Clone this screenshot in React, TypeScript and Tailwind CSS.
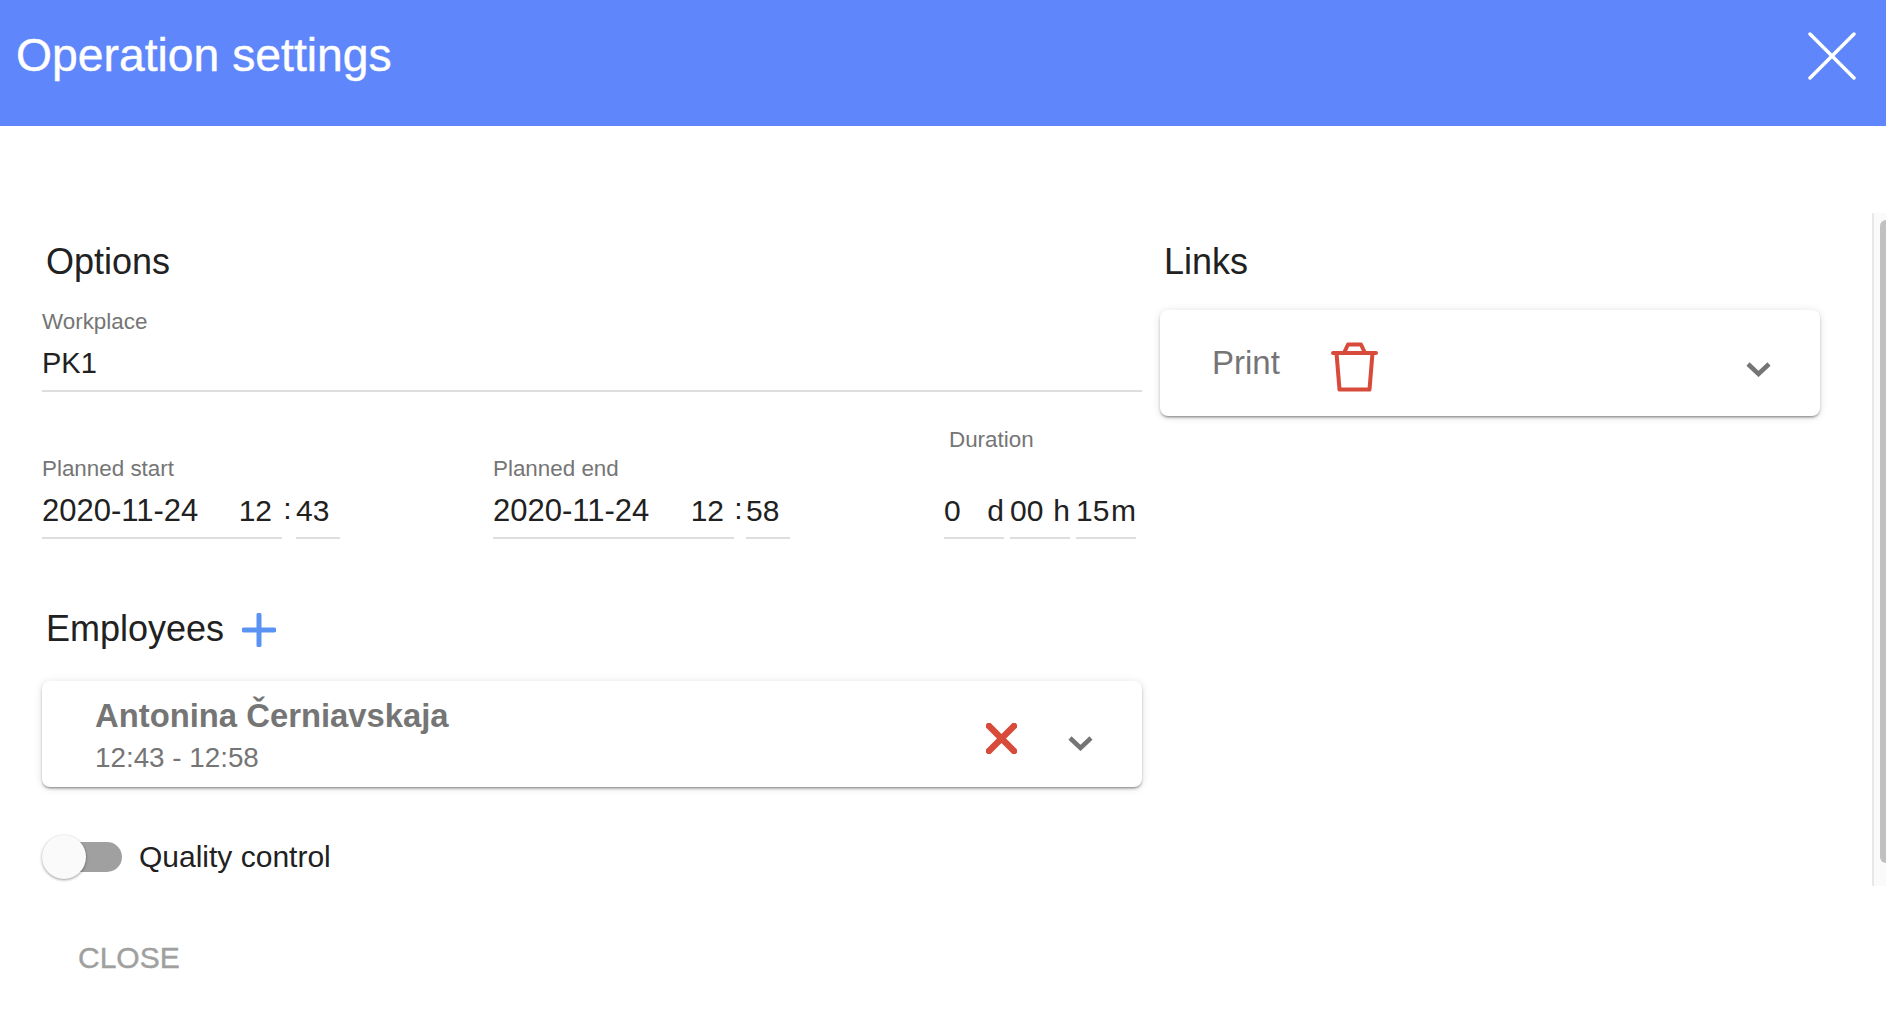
const sans = "font-['Liberation_Sans',Arial,sans-serif]";

const Chevron = ({ className }: { className?: string }) => (
  <svg width="25" height="16" viewBox="0 0 25 16" fill="none" className={className}>
    <path d="M2 3l10.5 10L23 3" stroke="#757575" strokeWidth="4.5" />
  </svg>
);

const Heading = ({ children }: { children: string }) => (
  <h2 className="h-[42px] text-[36px] leading-[42px] text-[#212121]">{children}</h2>
);

const Label = ({ children, className = '' }: { children: string; className?: string }) => (
  <div className={`h-[26px] text-[22.4px] leading-[26px] text-[#757575] whitespace-nowrap ${className}`}>{children}</div>
);

// value sitting on a light underline, like the date and duration inputs
const Underlined = ({ children, className = '' }: { children: React.ReactNode; className?: string }) => (
  <div className={`h-[45px] pb-[9px] border-b-2 border-[#dedede] text-[30px] leading-[34px] text-[#212121] whitespace-nowrap ${className}`}>
    {children}
  </div>
);

const DateField = ({ label, date, hours, minutes, dateWidth, gap }: {
  label: string;
  date: string;
  hours: string;
  minutes: string;
  dateWidth: string;
  gap: string;
}) => (
  <div>
    <Label>{label}</Label>
    <div className="flex mt-[12px]">
      <Underlined className={`flex justify-between pr-[10px] ${dateWidth}`}>
        <span className="text-[31px]">{date}</span>
        <span>{hours}</span>
      </Underlined>
      <div className={`pr-[3px] text-center text-[30px] leading-[30px] text-[#212121] ${gap}`}>:</div>
      <Underlined className="w-[44px]">{minutes}</Underlined>
    </div>
  </div>
);

const DurationPart = ({ value, unit }: { value: string; unit: string }) => (
  <Underlined className="flex justify-between w-[60px]">
    <span>{value}</span>
    <span>{unit}</span>
  </Underlined>
);

export default function App() {
  return (
    <div className={`flex flex-col h-screen overflow-hidden bg-white ${sans}`}>
      <header className="flex justify-between shrink-0 h-[126px] bg-[#5f87fb] pl-[16px] pr-[30px]">
        <h1 className="mt-[30px] h-[50px] text-[46.3px] leading-[50px] text-white [-webkit-text-stroke:0.4px_white]">
          Operation settings
        </h1>
        <svg width="48" height="48" viewBox="0 0 48 48" fill="none" className="mt-[32px]">
          <path d="M2 2l44 44M46 2L2 46" stroke="#fff" strokeWidth="3.5" strokeLinecap="round" />
        </svg>
      </header>

      <div className="flex flex-1 min-h-0">
        <main className="flex gap-[18px] pl-[42px] flex-1 pt-[115px]">
          <section className="w-[1100px]">
            <div className="pl-[4px]">
              <Heading>Options</Heading>
            </div>
            <Label className="mt-[26px]">Workplace</Label>
            <div className="h-[46px] mt-[11px] border-b-2 border-[#dedede] text-[29px] leading-[34px] text-[#212121]">PK1</div>

            <div className="flex items-end mt-[35px]">
              <DateField label="Planned start" date="2020-11-24" hours="12" minutes="43" dateWidth="w-[240px]" gap="w-[14px]" />
              <div className="ml-[153px]">
                <DateField label="Planned end" date="2020-11-24" hours="12" minutes="58" dateWidth="w-[241px]" gap="w-[12px]" />
              </div>
              <div className="ml-[154px]">
                <Label className="ml-[5px] mb-[41px]">Duration</Label>
                <div className="flex gap-[6px]">
                  <DurationPart value="0" unit="d" />
                  <DurationPart value="00" unit="h" />
                  <DurationPart value="15" unit="m" />
                </div>
              </div>
            </div>

            <div className="flex items-center gap-[18px] pl-[4px] mt-[69px]">
              <Heading>Employees</Heading>
              <svg width="34" height="34" viewBox="0 0 34 34" fill="none" className="mt-[2px]">
                <path d="M17 2v30M2 17h30" stroke="#5b93f5" strokeWidth="5" strokeLinecap="round" />
              </svg>
            </div>

            <div className="flex justify-between h-[106px] mt-[31px] pl-[53px] pr-[49px] bg-white rounded-[8px] shadow-[0_2px_3px_-1px_rgba(0,0,0,0.5),0_1px_8px_0_rgba(0,0,0,0.13)]">
              <div className="pt-[16px]">
                <div className="h-[38px] text-[32.8px] leading-[38px] font-bold text-[#757575]">Antonina Černiavskaja</div>
                <div className="h-[32px] mt-[7px] text-[27.8px] leading-[32px] text-[#757575]">12:43 - 12:58</div>
              </div>
              <div className="flex gap-[51px]">
                <svg width="31" height="31" viewBox="0 0 31 31" fill="none" className="mt-[42px]">
                  <path d="M3 3l25 25M28 3L3 28" stroke="#d84a3a" strokeWidth="6.5" strokeLinecap="round" />
                </svg>
                <Chevron className="mt-[54px]" />
              </div>
            </div>

            <div className="flex items-center mt-[48px]">
              <div className="relative w-[80px] h-[44px] flex items-center">
                <div className="ml-[20px] w-[60px] h-[30px] rounded-full bg-[#a0a0a0]" />
                <div className="absolute left-0 top-0 w-[44px] h-[44px] rounded-full bg-[#fafafa] shadow-[0_1px_3px_rgba(0,0,0,0.4)]" />
              </div>
              <span className="ml-[17px] text-[30px] leading-[34px] text-[#212121]">Quality control</span>
            </div>

            <div className="h-[34px] mt-[62px] ml-[36px] text-[30px] leading-[34px] text-[#a0a0a0] [-webkit-text-stroke:0.4px_#a0a0a0]">CLOSE</div>
          </section>

          <section className="w-[660px]">
            <div className="pl-[4px]">
              <Heading>Links</Heading>
            </div>
            <div className="flex h-[106px] mt-[27px] pl-[52px] pr-[49px] bg-white rounded-[8px] shadow-[0_2px_3px_-1px_rgba(0,0,0,0.5),0_1px_8px_0_rgba(0,0,0,0.13)]">
              <span className="mt-[34px] h-[38px] text-[33px] leading-[38px] text-[#757575]">Print</span>
              <svg width="47" height="50" viewBox="0 0 47 50" fill="none" className="ml-[51px] mt-[32px]">
                <path
                  d="M2 11h43M5.5 11L8.5 47.5h30L41.5 11M13 11l4-8.5h13l4 8.5"
                  stroke="#d84a3a"
                  strokeWidth="4"
                  strokeLinecap="round"
                  strokeLinejoin="round"
                />
              </svg>
              <Chevron className="ml-auto mt-[51px]" />
            </div>
          </section>
        </main>

        {/* scrollbar only spans part of the body */}
        <div className="shrink-0 w-[14px] h-[673px] mt-[87px] pt-[7px] pl-[6px] bg-[#fafafa] border-l-2 border-[#e8e8e8]">
          <div className="h-[643px] bg-[#c1c1c1] rounded-l-[6px]" />
        </div>
      </div>
    </div>
  );
}
